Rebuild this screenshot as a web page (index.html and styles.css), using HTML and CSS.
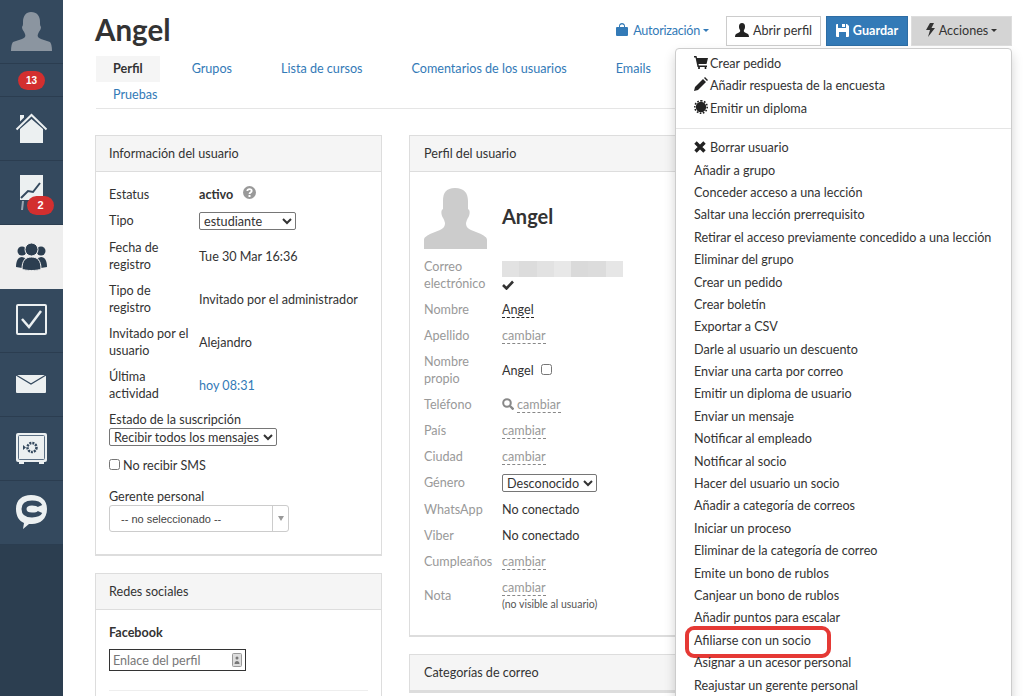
FILE: index.html
```html
<!DOCTYPE html>
<html lang="es">
<head>
<meta charset="utf-8">
<title>Angel</title>
<link rel="stylesheet" href="styles.css">
</head>
<body>
<div class="app">
  <nav class="side">
    <div class="side-item tall"><svg width="63" height="63" viewBox="0 0 63 63"><path fill="#8b95a0" d="M31 12c6 0 9 4 9 10 0 2 0 4 1 5 0 3-2 4-3 7-1 2 0 4 3 5l9 3c1 1 2 4 2 9H11c0-5 1-8 2-9l9-3c3-1 4-3 3-5-1-3-3-4-3-7 1-1 1-3 1-5 0-6 3-10 8-10z"/></svg></div>
    <div class="side-item short"><span class="badge">13</span></div>
    <div class="side-item tall"><svg width="63" height="63" viewBox="0 0 63 63"><path fill="#ecf0f1" d="M20 18h4v2.500l-4 4zM20 32l11.500-10L43 32v14H20z"/><path fill="none" stroke="#ecf0f1" stroke-width="2" d="M16.500 32.500L31.500 18l15 14.500"/></svg></div>
    <div class="side-item tall"><svg width="63" height="63" viewBox="0 0 63 63"><path fill="#ecf0f1" d="M20 14h23v25H20z"/><path fill="#9aa5b1" d="M22 40h2l-1 9h-2zM28 40h2v9h-2z"/><path fill="none" stroke="#34495e" stroke-width="2" d="M21 37l7-7 5 1 7-9"/></svg><span class="badge badge-low">2</span></div>
    <div class="side-item tall active"><svg width="63" height="63" viewBox="0 0 63 63"><g fill="#2c3e50"><circle cx="22" cy="26" r="4.500"/><circle cx="41" cy="26" r="4.500"/><path d="M16 42c0-6 2-10 6-10l3 1-3 10zM47 42c0-6-2-10-6-10l-3 1 3 10z"/></g><circle cx="31.500" cy="24.500" r="6.500" fill="#2c3e50" stroke="#eee" stroke-width="1"/><path fill="#2c3e50" stroke="#eee" d="M22 44c0-8 3-12 9.500-12S41 36 41 44c-3 2-16 2-19 0z"/></svg></div>
    <div class="side-item tall"><svg width="63" height="63" viewBox="0 0 63 63"><rect x="17" y="16" width="29" height="29" rx="1" fill="none" stroke="#ecf0f1" stroke-width="2"/><path fill="none" stroke="#ecf0f1" stroke-width="2.500" d="M22 30l7 8 12-16"/></svg></div>
    <div class="side-item tall"><svg width="63" height="63" viewBox="0 0 63 63"><rect x="16" y="22" width="30" height="18" rx="1" fill="#ecf0f1"/><path fill="none" stroke="#34495e" stroke-width="1.300" d="M16 22l15 9 15-9"/></svg></div>
    <div class="side-item tall"><svg width="63" height="63" viewBox="0 0 63 63"><rect x="16" y="16" width="31" height="29" rx="2" fill="#ecf0f1"/><path fill="#ecf0f1" d="M19 45h5v2h-5zM39 45h5v2h-5z"/><rect x="18.500" y="18.500" width="26" height="24" rx="1" fill="none" stroke="#5b6f84"/><circle cx="32" cy="30.500" r="4.500" fill="none" stroke="#34495e" stroke-width="2.500" stroke-dasharray="2 1"/><path fill="#34495e" d="M23 28l3 2.500-3 2.500z"/></svg></div>
    <div class="side-item tall"><svg width="63" height="63" viewBox="0 0 63 63"><path fill="#ecf0f1" d="M31 14c10 0 16 5 16 14 0 10-7 15-15 15h-3l-6 5 1-6c-5-2-8-7-8-14 0-9 6-14 15-14z"/><path fill="none" stroke="#34495e" stroke-width="5" d="M40 25c-1-2-4-3-8-3-5 0-8 2-8 6s3 6 8 6c4 0 7-1 8-3"/></svg></div>
    <div class="side-rest"></div>
  </nav>

  <main class="main">
    <header class="head">
      <h1 class="title">Angel</h1>
      <div class="head-actions">
        <a class="auth"><svg class="ico ico-auth" width="12" height="14" viewBox="0 0 12 14"><path fill="#337ab7" d="M1 4h2V3c0-4 6-4 6 0v1h2a1 1 0 0 1 1 1v7a1 1 0 0 1-1 1H1a1 1 0 0 1-1-1V5a1 1 0 0 1 1-1zm3 0h4V3c0-2-4-2-4 0z"/></svg>Autorización<i class="caret"></i></a>
        <a class="btn btn-white"><svg class="ico" width="14" height="14" viewBox="0 0 14 14"><path fill="#222" d="M7 0c2 0 3 1.500 3 3.500 0 1 0 2-1 3.500-.5 1 0 2 1 2.500l3 1.500c.5.500 1 1.500 1 3H0c0-1.500.5-2.500 1-3l3-1.500c1-.5 1.500-1.500 1-2.500C4 5.500 4 4.500 4 3.500 4 1.500 5 0 7 0z"/></svg>Abrir perfil</a>
        <a class="btn btn-blue"><svg class="ico" width="13" height="13" viewBox="0 0 13 13"><path fill="#fff" d="M0 1a1 1 0 0 1 1-1h1v4h8V0h1l2 2v10a1 1 0 0 1-1 1H1a1 1 0 0 1-1-1zM6 0h3v3H6zM3 8v5h7V8z"/></svg>Guardar</a>
        <a class="btn btn-grey"><svg class="ico" width="9" height="14" viewBox="0 0 9 14"><path fill="#333" d="M4 0h4L5.500 5H9l-7 9 2-7H0z"/></svg>Acciones<i class="caret dark"></i></a>
      </div>
    </header>

    <ul class="tabs">
      <li class="tab on">Perfil</li>
      <li class="tab">Grupos</li>
      <li class="tab">Lista de cursos</li>
      <li class="tab">Comentarios de los usuarios</li>
      <li class="tab">Emails</li>
      <li class="tab spacer">Notificaciones</li>
      <li class="tab">Pruebas</li>
    </ul>

    <div class="cols">
      <div class="col-left">
        <section class="panel first">
          <h2 class="panel-head">Información del usuario</h2>
          <div class="panel-body info">
            <div class="row"><span class="lab">Estatus</span><span class="val"><b>activo</b><svg class="help" width="13" height="13" viewBox="0 0 13 13"><circle cx="6.500" cy="6.500" r="6.500" fill="#999"/><path fill="none" stroke="#fff" stroke-width="1.800" d="M4.300 5c.2-2.500 4.400-2.500 4.400 0 0 1.500-2.200 1.500-2.200 3"/><rect x="5.500" y="9" width="2" height="2" fill="#fff"/></svg></span></div>
            <div class="row"><span class="lab lab-top">Tipo</span><span class="val"><select class="sel sel-tipo"><option>estudiante</option></select></span></div>
            <div class="row"><span class="lab">Fecha de registro</span><span class="val">Tue 30 Mar 16:36</span></div>
            <div class="row"><span class="lab">Tipo de registro</span><span class="val">Invitado por el administrador</span></div>
            <div class="row"><span class="lab">Invitado por el usuario</span><span class="val">Alejandro</span></div>
            <div class="row"><span class="lab">Última actividad</span><span class="val link">hoy 08:31</span></div>
            <div class="stack">
              <label class="sub">Estado de la suscripción</label>
              <select class="sel sel-sub"><option>Recibir todos los mensajes</option></select>
            </div>
            <label class="check-row"><input type="checkbox" class="chk">No recibir SMS</label>
            <div class="stack mgr">
              <label class="sub">Gerente personal</label>
              <div class="chosen"><span class="chosen-text">-- no seleccionado --</span><span class="chosen-arrow"><i></i></span></div>
            </div>
          </div>
        </section>
        <section class="panel">
          <h2 class="panel-head">Redes sociales</h2>
          <div class="panel-body social">
            <h3 class="net">Facebook</h3>
            <div class="net-input"><span>Enlace del perfil</span><svg width="10" height="14" viewBox="0 0 10 14"><rect x=".5" y=".5" width="9" height="13" rx="1" fill="#ddd" stroke="#999"/><circle cx="5" cy="5" r="1.500" fill="#777"/><path fill="#777" d="M2.500 11c0-4 5-4 5 0z"/></svg></div>
            <hr class="sep">
          </div>
        </section>
      </div>

      <div class="col-right">
        <section class="panel first">
          <h2 class="panel-head head-wide">Perfil del usuario</h2>
          <div class="panel-body profile">
            <div class="who">
              <svg width="63" height="61" viewBox="0 0 63 61"><path fill="#ccc" d="M31 0c9 0 13 5 13 13v8c2 1 2 4 1 7-1 2-2 3-3 7 0 3 1 5 5 7l10 4c3 2 6 3 6 6v9H0v-9c0-3 3-4 6-6l10-4c4-2 5-4 5-7-1-4-2-5-3-7-1-3-1-6 1-7v-8C19 5 22 0 31 0z"/></svg>
              <h2 class="who-name">Angel</h2>
            </div>
            <div class="prow two"><span class="plab">Correo electrónico</span><span class="pval"><span class="blur"><i></i><i></i><i></i><i></i><i></i><i></i><i></i></span><svg class="tick" width="12" height="10" viewBox="0 0 12 10"><path fill="none" stroke="#333" stroke-width="2.600" d="M1 5l3.500 3.500L11 1.500"/></svg></span></div>
            <div class="prow"><span class="plab">Nombre</span><span class="pval"><a class="edit dark">Angel</a></span></div>
            <div class="prow"><span class="plab">Apellido</span><span class="pval"><a class="edit">cambiar</a></span></div>
            <div class="prow"><span class="plab">Nombre propio</span><span class="pval">Angel<input type="checkbox" class="chk chk-own"></span></div>
            <div class="prow"><span class="plab">Teléfono</span><span class="pval"><svg class="mag" width="12" height="12" viewBox="0 0 12 12"><circle cx="5" cy="5" r="3.800" fill="none" stroke="#888" stroke-width="2"/><path stroke="#888" stroke-width="2.400" d="M8 8l3.500 3.500"/></svg><a class="edit">cambiar</a></span></div>
            <div class="prow"><span class="plab">País</span><span class="pval"><a class="edit">cambiar</a></span></div>
            <div class="prow"><span class="plab">Ciudad</span><span class="pval"><a class="edit">cambiar</a></span></div>
            <div class="prow"><span class="plab lab-top">Género</span><span class="pval"><select class="sel sel-gen"><option>Desconocido</option></select></span></div>
            <div class="prow"><span class="plab">WhatsApp</span><span class="pval">No conectado</span></div>
            <div class="prow"><span class="plab">Viber</span><span class="pval">No conectado</span></div>
            <div class="prow"><span class="plab">Cumpleaños</span><span class="pval"><a class="edit">cambiar</a></span></div>
            <div class="prow"><span class="plab">Nota</span><span class="pval"><a class="edit">cambiar</a><small class="note">(no visible al usuario)</small></span></div>
          </div>
        </section>
        <section class="panel">
          <h2 class="panel-head head-wide">Categorías de correo</h2>
        </section>
      </div>
    </div>
  </main>

  <div class="menu">
    <ul class="menu-group">
      <li class="mi"><svg class="mico" width="14" height="13" viewBox="0 0 14 13"><path fill="#222" d="M0 0h2.500l.5 2h11l-1.500 6H4.500l.3 1.500H13V11H3.500L1.500 1.500H0z"/><circle cx="5" cy="12" r="1"/><circle cx="11.500" cy="12" r="1"/></svg>Crear pedido</li>
      <li class="mi"><svg class="mico" width="14" height="14" viewBox="0 0 14 14"><path fill="#222" d="M0 14l1-4L9 2l3 3-8 8zM10 1l1-1 3 3-1 1z"/></svg>Añadir respuesta de la encuesta</li>
      <li class="mi"><svg class="mico" width="14" height="14" viewBox="0 0 14 14"><circle cx="7" cy="7" r="5.200" fill="#222"/><path fill="none" stroke="#222" stroke-width="1.600" stroke-dasharray="1.600 1.500" d="M7 .8a6.200 6.200 0 1 1 0 12.400A6.200 6.200 0 0 1 7 .8z"/></svg>Emitir un diploma</li>
    </ul>
    <hr class="menu-sep">
    <ul class="menu-group">
      <li class="mi"><svg class="mico mico-x" width="12" height="12" viewBox="0 0 12 12"><path fill="none" stroke="#222" stroke-width="3.400" d="M1.500 1.500l9 9M10.500 1.500l-9 9"/></svg>Borrar usuario</li>
      <li class="mi">Añadir a grupo</li>
      <li class="mi">Conceder acceso a una lección</li>
      <li class="mi">Saltar una lección prerrequisito</li>
      <li class="mi">Retirar el acceso previamente concedido a una lección</li>
      <li class="mi">Eliminar del grupo</li>
      <li class="mi">Crear un pedido</li>
      <li class="mi">Crear boletín</li>
      <li class="mi">Exportar a CSV</li>
      <li class="mi">Darle al usuario un descuento</li>
      <li class="mi">Enviar una carta por correo</li>
      <li class="mi">Emitir un diploma de usuario</li>
      <li class="mi">Enviar un mensaje</li>
      <li class="mi">Notificar al empleado</li>
      <li class="mi">Notificar al socio</li>
      <li class="mi">Hacer del usuario un socio</li>
      <li class="mi">Añadir a categoría de correos</li>
      <li class="mi">Iniciar un proceso</li>
      <li class="mi">Eliminar de la categoría de correo</li>
      <li class="mi">Emite un bono de rublos</li>
      <li class="mi">Canjear un bono de rublos</li>
      <li class="mi">Añadir puntos para escalar</li>
      <li class="mi mark">Afiliarse con un socio</li>
      <li class="mi">Asignar a un acesor personal</li>
      <li class="mi">Reajustar un gerente personal</li>
    </ul>
  </div>
</div>
</body>
</html>
```

FILE: styles.css
```css
*, *::after { box-sizing: border-box; }
html, body { margin: 0; height: 696px; overflow: hidden; background: #fff; }
body { font: 12.600px/17px Lato, "Liberation Sans", sans-serif; color: #333; }
ul { list-style: none; margin: 0; padding: 0; }
h1, h2, h3 { margin: 0; font-weight: normal; }

.app { display: flex; height: 696px; position: relative; overflow: hidden; }

.side { width: 63px; flex: none; display: flex; flex-direction: column; background: #34495e; }
.side-item { position: relative; display: flex; align-items: center; justify-content: center; border-bottom: 1px solid #2b3d50; }
.side-item svg { display: block; }
.tall { height: 64px; }
.short { height: 33px; }
.active { background: #eee; border-bottom-color: #eee; }
.side-rest { flex: 1; background: #2c3e50; }

.badge { display: block; width: 27px; height: 19px; border-radius: 10px; background: #d32f2f; color: #fff; font: bold 10px/19px "Liberation Sans", sans-serif; text-align: center; }
.badge-low { position: absolute; left: 27px; top: 35px; font-size: 11px; }

.main { flex: 1; min-width: 0; padding: 16px 14px 0 32px; }

.head { display: flex; align-items: flex-start; justify-content: space-between; height: 40px; }
.title { font-size: 29.500px; line-height: 30px; font-weight: 700; margin-top: -1px; color: #333; }
.head-actions { display: flex; align-items: center; height: 30px; }
.auth { color: #337ab7; margin-right: 17px; padding-bottom: 2px; display: flex; align-items: center; letter-spacing: -.25px; }
.btn { height: 30px; padding-bottom: 2px; display: flex; align-items: center; justify-content: center; border: 1px solid #ccc; }
.btn-white { width: 95px; background: #fff; color: #333; margin-right: 5px; }
.btn-blue { width: 82px; background: #337ab7; border-color: #2e6da4; color: #fff; font-weight: 700; margin-right: 3px; }
.btn-grey { width: 101px; background: #d4d4d4; border-color: #ddd; color: #333; }
.ico { margin-right: 4px; }
.ico-auth { margin-right: 5px; }
.caret { width: 0; height: 0; margin-left: 3px; border: 3.500px solid transparent; border-top-color: #337ab7; border-bottom: 0; }
.caret.dark { border-top-color: #333; }

.tabs { display: flex; flex-wrap: wrap; height: 53px; margin: 0 0 0 1px; border-bottom: 1px solid #e5e5e5; align-content: flex-start; }
.tab { height: 26px; line-height: 26px; padding: 0 17px; margin-right: 15px; color: #337ab7; white-space: nowrap; }
.tab.on { background: #f5f5f5; color: #333; font-weight: 700; }
.spacer { visibility: hidden; width: 250px; margin-right: 0; }

.cols { display: flex; gap: 27px; padding-top: 26px; }
.col-left { width: 287px; flex: none; }
.col-right { width: 600px; flex: none; }

.panel { border: 1px solid #ddd; border-bottom-width: 2px; margin-bottom: 17px; }
.panel-head { height: 36px; padding: 0 13px; background: #f5f5f5; border-bottom: 1px solid #ddd; font-size: 12.600px; line-height: 35px; }
.head-wide { padding: 0 14px; }
.panel-body { padding: 13px; }

.info { height: 382px; padding-top: 14px; }
.row { display: flex; padding-bottom: 9px; align-items: center; }
.lab { width: 90px; flex: none; padding-right: 8px; }
.lab-top { align-self: flex-start; }
.val { flex: 1; }
.val b { font-weight: 700; }
.link { color: #337ab7; }
.help { margin-left: 10px; }
.sel { font: 12.600px Lato, "Liberation Sans", sans-serif; color: #333; background: #fff; border: 1px solid #767676; border-radius: 2px; height: 18px; padding: 0; display: block; }
.sel-tipo { width: 97px; }
.sel-sub { width: 168px; }
.sel-gen { width: 95px; }
.stack .sub { display: block; }
.check-row { display: flex; align-items: center; margin-top: 11px; }
.chk { width: 11px; height: 11px; margin: 0 3px 3px 0; }
.mgr { margin-top: 14px; }
.chosen { width: 180px; height: 27px; display: flex; border: 1px solid #ccc; border-radius: 3px; background: #fff; }
.chosen-text { flex: 1; padding-left: 11px; font: 11px/26px "Liberation Sans", sans-serif; color: #444; }
.chosen-arrow { width: 16px; border-left: 1px solid #ccc; display: flex; justify-content: center; align-items: center; }
.chosen-arrow i { width: 0; height: 0; border: 3px solid transparent; border-top: 5px solid #999; border-bottom: 0; }

.social { padding-top: 14px; height: 200px; }
.net { font-size: 12.600px; font-weight: 700; line-height: 17px; }
.net-input { width: 137px; height: 22px; margin-top: 8px; border: 1px solid #333; display: flex; align-items: center; justify-content: space-between; padding: 0 3px; color: #777; }
.sep { border: 0; border-top: 1px solid #eee; margin: 19px 0 0; }

.profile { padding: 16px 14px 0; height: 463px; }
.who { display: flex; align-items: center; gap: 15px; height: 70px; padding-bottom: 9px; }
.who svg { display: block; }
.who-name { font-size: 20px; font-weight: 700; line-height: 24px; margin-bottom: 5px; }
.prow { display: flex; align-items: center; padding-bottom: 9px; }
.plab { width: 78px; flex: none; color: #999; }
.pval { flex: 1; }
.blur { display: flex; width: 121px; height: 16px; }
.blur i { flex: 1; background: #e2e2e2; }
.blur i:nth-child(2n) { background: #dcdcdc; }
.blur i:nth-child(4) { background: #e8e8e8; }
.blur i:nth-child(5) { background: #dadada; }
.blur i:nth-child(7) { background: #e6e6e6; }
.tick { display: block; margin-top: 3px; }
.edit { color: #999; border-bottom: 1px dashed #888; }
.edit.dark { color: #333; border-bottom-color: #222; }
.chk-own { margin: 0 0 3px 7px; vertical-align: middle; }
.mag { margin-right: 3px; vertical-align: -1px; }
.note { display: block; font-size: 10.500px; line-height: 13px; color: #555; margin-top: 2px; }

.menu { position: absolute; left: 675px; top: 48px; width: 337px; height: 660px; background: #fff; border: 1px solid #ccc; border-radius: 4px; box-shadow: 0 6px 12px rgba(0,0,0,.175); padding-top: 4px; }
.menu-sep { border: 0; border-top: 1px solid #e5e5e5; margin: 8px 0 8px; }
.mi { height: 22.400px; line-height: 22.400px; padding: 0 18px; color: #333; white-space: nowrap; position: relative; }
.mico { margin-right: 2px; vertical-align: -1px; }
.mico-x { margin-right: 4px; }
.mark::after { content: ""; position: absolute; left: 9px; top: -4px; width: 146px; height: 32px; border: 4.500px solid #e53935; border-radius: 9px; }
```
